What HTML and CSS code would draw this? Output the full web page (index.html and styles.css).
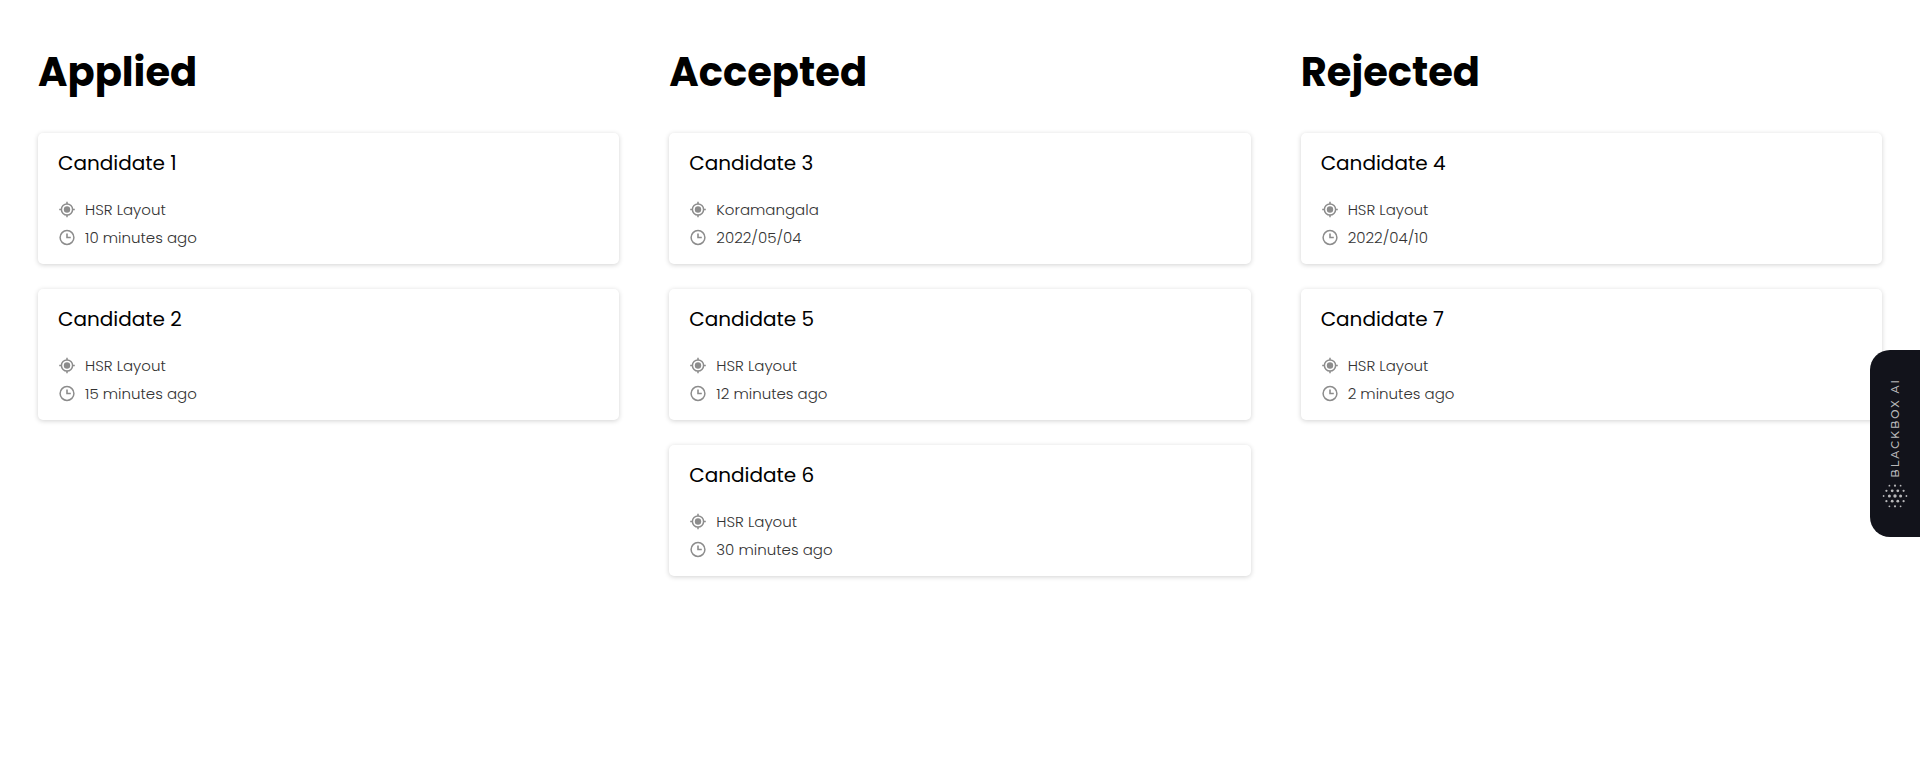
FILE: index.html
```html
<!DOCTYPE html>
<html lang="en">
<head>
<meta charset="utf-8">
<title>Candidates</title>
<link rel="stylesheet" href="styles.css">
</head>
<body>
<svg class="defs" aria-hidden="true">
  <symbol id="icon-location" viewBox="0 0 18 18">
    <circle cx="9" cy="8.5" r="5.6" fill="none" stroke="currentColor" stroke-width="1.5"/>
    <circle cx="9" cy="8.5" r="3.2" fill="currentColor"/>
    <path d="M9 .8v2.3M9 13.9v2.3M1.2 8.5h2.4M14.4 8.5h2.4" fill="none" stroke="currentColor" stroke-width="1.5"/>
  </symbol>
  <symbol id="icon-clock" viewBox="0 0 18 18">
    <circle cx="9" cy="8.5" r="6.9" fill="none" stroke="currentColor" stroke-width="1.5"/>
    <path d="M9 4.5v4h3.8" fill="none" stroke="currentColor" stroke-width="1.6"/>
  </symbol>
</svg>
<main class="board">
  <section class="column">
    <h1 class="column-title">Applied</h1>
    <article class="card">
      <h2 class="card-name">Candidate 1</h2>
      <p class="detail"><svg class="icon"><use href="#icon-location"/></svg>HSR Layout</p>
      <p class="detail"><svg class="icon"><use href="#icon-clock"/></svg>10 minutes ago</p>
    </article>
    <article class="card">
      <h2 class="card-name">Candidate 2</h2>
      <p class="detail"><svg class="icon"><use href="#icon-location"/></svg>HSR Layout</p>
      <p class="detail"><svg class="icon"><use href="#icon-clock"/></svg>15 minutes ago</p>
    </article>
  </section>
  <section class="column">
    <h1 class="column-title">Accepted</h1>
    <article class="card">
      <h2 class="card-name">Candidate 3</h2>
      <p class="detail"><svg class="icon"><use href="#icon-location"/></svg>Koramangala</p>
      <p class="detail"><svg class="icon"><use href="#icon-clock"/></svg>2022/05/04</p>
    </article>
    <article class="card">
      <h2 class="card-name">Candidate 5</h2>
      <p class="detail"><svg class="icon"><use href="#icon-location"/></svg>HSR Layout</p>
      <p class="detail"><svg class="icon"><use href="#icon-clock"/></svg>12 minutes ago</p>
    </article>
    <article class="card">
      <h2 class="card-name">Candidate 6</h2>
      <p class="detail"><svg class="icon"><use href="#icon-location"/></svg>HSR Layout</p>
      <p class="detail"><svg class="icon"><use href="#icon-clock"/></svg>30 minutes ago</p>
    </article>
  </section>
  <section class="column">
    <h1 class="column-title">Rejected</h1>
    <article class="card">
      <h2 class="card-name">Candidate 4</h2>
      <p class="detail"><svg class="icon"><use href="#icon-location"/></svg>HSR Layout</p>
      <p class="detail"><svg class="icon"><use href="#icon-clock"/></svg>2022/04/10</p>
    </article>
    <article class="card">
      <h2 class="card-name">Candidate 7</h2>
      <p class="detail"><svg class="icon"><use href="#icon-location"/></svg>HSR Layout</p>
      <p class="detail"><svg class="icon"><use href="#icon-clock"/></svg>2 minutes ago</p>
    </article>
  </section>
</main>
<button class="assistant" type="button">
  <span class="assistant-label">BLACKBOX AI</span>
  <svg class="assistant-logo" viewBox="0 0 26 26" aria-hidden="true">
    <g fill="currentColor">
      <circle cx="7.4" cy="2.7" r=".9"/><circle cx="13" cy="2.7" r="1.1"/><circle cx="18.6" cy="2.7" r=".9"/>
      <circle cx="4.4" cy="7.8" r="1.1"/><circle cx="10.2" cy="7.8" r="1.4"/><circle cx="15.8" cy="7.8" r="1.4"/><circle cx="21.6" cy="7.8" r="1.1"/>
      <circle cx="1.6" cy="13" r=".9"/><circle cx="7.4" cy="13" r="1.5"/><circle cx="13" cy="13" r="1.7"/><circle cx="18.6" cy="13" r="1.5"/><circle cx="24.4" cy="13" r=".9"/>
      <circle cx="4.4" cy="18.2" r="1.1"/><circle cx="10.2" cy="18.2" r="1.4"/><circle cx="15.8" cy="18.2" r="1.4"/><circle cx="21.6" cy="18.2" r="1.1"/>
      <circle cx="7.4" cy="23.3" r=".9"/><circle cx="13" cy="23.3" r="1.1"/><circle cx="18.6" cy="23.3" r=".9"/>
    </g>
  </svg>
</button>
</body>
</html>
```
FILE: styles.css
```css
* {
  box-sizing: border-box;
  margin: 0;
}

body {
  background: #fff;
  color: #000;
  font-family: Poppins, Inter, "Open Sans", sans-serif;
}

.defs {
  display: none;
}

.board {
  display: grid;
  grid-template-columns: repeat(3, 1fr);
  gap: 50px;
  align-items: start;
  padding: 42px 38px;
}

.column {
  display: flex;
  flex-direction: column;
  gap: 25px;
}

.column-title {
  margin-bottom: 6px;
  font-size: 40px;
  font-weight: 700;
  line-height: 60px;
}

.card {
  padding: 15px 20px 12px;
  border-radius: 5px;
  background: #fff;
  box-shadow: 0 1px 5px rgba(0, 0, 0, 0.18);
}

.card-name {
  margin-bottom: 18px;
  font-size: 20px;
  font-weight: 400;
  line-height: 30px;
}

.detail {
  display: flex;
  align-items: center;
  gap: 9px;
  color: #333;
  font-size: 15px;
  font-weight: 300;
  line-height: 28px;
}

.icon {
  width: 18px;
  height: 18px;
  color: #8c8c8c;
}

.assistant {
  position: fixed;
  top: 350px;
  right: 0;
  display: flex;
  flex-direction: column;
  align-items: center;
  gap: 5px;
  width: 50px;
  padding: 28px 0;
  border: 0;
  border-radius: 20px 0 0 20px;
  background: #12131b;
  color: #b8b8ba;
  font-family: Montserrat, Poppins, Inter, sans-serif;
}

.assistant-label {
  writing-mode: vertical-rl;
  transform: rotate(180deg);
  font-size: 11px;
  font-weight: 500;
  letter-spacing: 2px;
  line-height: 16px;
}

.assistant-logo {
  width: 26px;
  height: 26px;
}
```
